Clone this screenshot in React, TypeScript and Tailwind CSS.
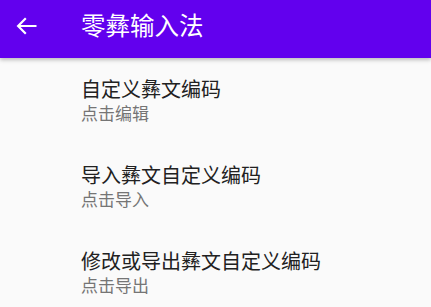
import React from "react";

const items = [
  { title: "自定义彝文编码", sub: "点击编辑" },
  { title: "导入彝文自定义编码", sub: "点击导入" },
  { title: "修改或导出彝文自定义编码", sub: "点击导出" },
];

export default function App() {
  return (
    <div
      className="w-[431px] h-[307px] overflow-hidden bg-[#fafafa] flex flex-col"
      style={{ fontFamily: '"Noto Sans CJK SC", "Noto Sans", sans-serif' }}
    >
      <div className="h-[58px] shrink-0 bg-[#6200ee] flex items-start shadow-[0_2px_4px_rgba(0,0,0,0.25)] relative z-10">
        <div className="w-[81px] shrink-0 pl-[16px] pt-[17px]">
          <svg width="21" height="18" viewBox="0 0 21 18" fill="none" className="block">
            <path d="M20.5 9H2.5M9.8 1.3L2.1 9l7.7 7.7" stroke="white" strokeWidth="2.2" />
          </svg>
        </div>
        <div className="text-white text-[24.5px] leading-[30px] pt-[10px]">零彝输入法</div>
      </div>
      <div className="flex flex-col">
        {items.map((it) => (
          <div key={it.title} className="h-[86px] pl-[81px] pt-[18px] flex flex-col">
            <div className="text-[20px] leading-[26px] text-[#212121]">{it.title}</div>
            <div className="text-[17px] leading-[22px] text-[#757575]">{it.sub}</div>
          </div>
        ))}
      </div>
    </div>
  );
}
